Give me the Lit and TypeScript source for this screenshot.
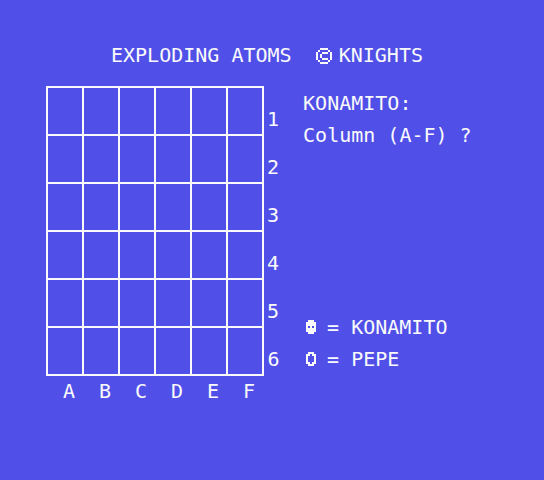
import { LitElement, html, css, svg } from "lit";
import { customElement, property } from "lit/decorators.js";

const COLUMNS = ["A", "B", "C", "D", "E", "F"];
const ROWS = [1, 2, 3, 4, 5, 6];

/** Turns rows of "#" and "." into one path of unit squares. */
const bitmapPath = (rows: string[]) =>
  rows
    .flatMap((row, y) => [...row].map((c, x) => (c === "#" ? `M${x} ${y}h1v1h-1z` : "")))
    .join("");

const SPRITES: Record<string, string[]> = {
  copyright: [
    "..####..",
    ".#....#.",
    "#..###.#",
    "#.#....#",
    "#.#....#",
    "#..###.#",
    ".#....#.",
    "..####..",
  ],
  full: [".###.", "#####", "#####", "#.#.#", "#####", "#####", ".###."],
  hollow: [".###.", "##.##", "#...#", "#...#", "#...#", "##.##", ".###."],
};

@customElement("pixel-sprite")
export class PixelSprite extends LitElement {
  @property() name = "full";

  static styles = css`
    :host {
      display: inline-flex;
    }
    .copyright {
      width: 16px;
      height: 16px;
    }
    .full,
    .hollow {
      width: 10px;
      height: 14px;
    }
  `;

  render() {
    const rows = SPRITES[this.name];
    return html`<svg
      class=${this.name}
      viewBox="0 0 ${rows[0].length} ${rows.length}"
      fill="currentColor"
      shape-rendering="crispEdges"
      aria-hidden="true"
    >
      ${svg`<path d=${bitmapPath(rows)} />`}
    </svg>`;
  }
}

@customElement("app-root")
export class AppRoot extends LitElement {
  static styles = css`
    :host {
      display: block;
      box-sizing: border-box;
      min-height: 100vh;
      padding: 48px 46px;
      background: #5050e8;
      color: #fafafa;
      font: 20px/14px "DejaVu Sans Mono", "Liberation Mono", monospace;
    }
    .title {
      display: flex;
      align-items: flex-start;
      margin: 0 0 22px;
      padding-left: 65px;
      font: inherit;
      white-space: pre;
    }
    .title pixel-sprite {
      margin-right: 7px;
    }
    .game {
      display: flex;
      gap: 22px;
    }
    .board {
      border-collapse: collapse;
      flex: none;
    }
    .board td {
      width: 34px;
      height: 46px;
      padding: 0;
      border: 2px solid #fafafa;
    }
    .board th {
      padding: 0;
      font-weight: normal;
    }
    .board .row {
      padding: 0 0 9px 3px;
      vertical-align: bottom;
    }
    .board .column {
      padding: 8px 0 2px 8px;
    }
    .panel {
      flex: 1;
      min-width: 0;
      display: flex;
      flex-direction: column;
      justify-content: space-between;
      padding: 10px 0 34px;
    }
    .turn,
    .players {
      display: flex;
      flex-direction: column;
      gap: 18px;
    }
    .turn p,
    .players {
      margin: 0;
      padding: 0;
    }
    .prompt {
      display: flex;
    }
    .prompt label {
      white-space: pre;
    }
    .prompt input {
      flex: 1;
      min-width: 0;
      height: 14px;
      padding: 0;
      border: 0;
      outline: 0;
      background: transparent;
      color: inherit;
      font: inherit;
    }
    .players {
      list-style: none;
    }
    .players li {
      display: flex;
      gap: 11px;
      padding-left: 3px;
      white-space: pre;
    }
  `;

  render() {
    return html`
      <h1 class="title"><span>EXPLODING ATOMS  </span><pixel-sprite name="copyright"></pixel-sprite><span>KNIGHTS</span></h1>
      <main class="game">
        <table class="board">
          <tbody>
            ${ROWS.map(
              (row) => html`<tr>
                ${COLUMNS.map(() => html`<td></td>`)}
                <th class="row" scope="row">${row}</th>
              </tr>`
            )}
            <tr>
              ${COLUMNS.map((column) => html`<th class="column" scope="col">${column}</th>`)}
            </tr>
          </tbody>
        </table>
        <section class="panel">
          <div class="turn">
            <p>KONAMITO:</p>
            <div class="prompt">
              <label for="column">Column (A-F) ?</label>
              <input id="column" maxlength="1" autocomplete="off" />
            </div>
          </div>
          <ul class="players">
            <li><pixel-sprite name="full"></pixel-sprite><span>= KONAMITO</span></li>
            <li><pixel-sprite name="hollow"></pixel-sprite><span>= PEPE</span></li>
          </ul>
        </section>
      </main>
    `;
  }
}
